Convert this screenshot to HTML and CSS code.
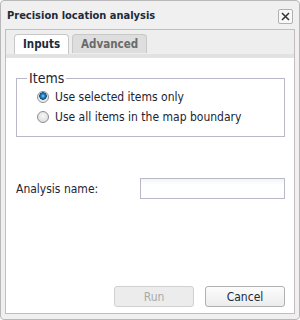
FILE: index.html
```html
<!DOCTYPE html>
<html lang="en">
	<head>
		<title>Precision location analysis</title>
		<link rel="stylesheet" href="styles.css">
	</head>
	<body>
		<div class="dialog">
			<div class="titlebar">
				<span class="title">Precision location analysis</span>
				<button class="close" title="Close">
					<svg width="9" height="9" viewBox="0 0 9 9"><path d="M1 1 L8 8 M8 1 L1 8" stroke="#333" stroke-width="1.5"/></svg>
				</button>
			</div>
			<div class="panel">
				<div class="tabs">
					<div class="tab active">Inputs</div>
					<div class="tab">Advanced</div>
				</div>
				<div class="body">
					<fieldset class="items">
						<legend>Items</legend>
						<label class="radio"><input type="radio" name="items" checked> Use selected items only</label>
						<label class="radio"><input type="radio" name="items"> Use all items in the map boundary</label>
					</fieldset>
					<div class="name-row">
						<label for="analysisName">Analysis name:</label>
						<input type="text" id="analysisName">
					</div>
					<div class="buttons">
						<button class="btn" disabled>Run</button>
						<button class="btn">Cancel</button>
					</div>
				</div>
			</div>
		</div>
	</body>
</html>
```
FILE: styles.css
```css
html, body {
	margin: 0;
	padding: 0;
}

body {
	font-family: "DejaVu Sans", sans-serif;
	font-stretch: condensed;
	font-size: 12px;
	color: #1e2432;
	background: #fff;
}

.dialog {
	width: 300px;
	height: 320px;
	box-sizing: border-box;
	background: #f0f0f0;
	border: 1px solid #b8b8b8;
	border-radius: 4px;
	padding: 0 4px 5px 4px;
	display: flex;
	flex-direction: column;
}

.titlebar {
	height: 28px;
	display: flex;
	align-items: center;
	justify-content: space-between;
	padding: 0 2px 0 2px;
}

.title {
	font-size: 11px;
	font-weight: bold;
	color: #1c2a3a;
}

.close {
	width: 15px;
	height: 15px;
	margin-top: 3px;
	padding: 0;
	border: 1px solid #b0b0b0;
	border-radius: 2px;
	background: #f8f8f8;
	display: flex;
	align-items: center;
	justify-content: center;
}

.panel {
	flex: 1;
	border: 1px solid #c4bcc0;
	background: #fff;
	display: flex;
	flex-direction: column;
}

.tabs {
	background: #eeeeee;
	padding: 4px 8px 0 8px;
	display: flex;
	gap: 3px;
	border-bottom: 4px solid #e2e2e2;
}

.tab {
	height: 18px;
	line-height: 19px;
	padding: 0 8px;
	border: 1px solid #c8c8c8;
	border-bottom: none;
	border-radius: 4px 4px 0 0;
	background: #dedede;
	color: #6a6a6a;
	font-size: 11.5px;
	font-weight: bold;
}

.tab.active {
	background: #fff;
	color: #1c2a3a;
	height: 19px;
}

.body {
	flex: 1;
	display: flex;
	flex-direction: column;
	padding: 12px 9px 6px 10px;
}

.items {
	margin: 0;
	padding: 3px 0 11px 20px;
	border: 1px solid #b8b8c8;
	display: flex;
	flex-direction: column;
	gap: 4px;
}

.items legend {
	font-size: 14px;
	padding: 0 2px;
	margin-left: -10px;
}

.radio {
	display: flex;
	align-items: center;
	height: 16px;
}

.radio input {
	appearance: none;
	margin: 0 6px 0 0;
	width: 12px;
	height: 12px;
	border: 1px solid #8e8e8e;
	border-radius: 50%;
	background: radial-gradient(circle at 50% 40%, #f6f6f6, #d6d6d6);
	box-shadow: 0 0 0 1px #fff;
}

.radio input:checked {
	background: radial-gradient(circle at 50% 40%, #7fd0ff 0, #1a7ec0 2px, #0f4f80 3.5px, #e4e4e4 4px, #f4f4f4 6px);
}

.name-row {
	display: flex;
	align-items: center;
	justify-content: space-between;
	margin-top: 41px;
}

.name-row input {
	width: 145px;
	height: 21px;
	box-sizing: border-box;
	border: 1px solid #b8b8c8;
	background: linear-gradient(#f2f4f4, #fff 6px);
}

.buttons {
	margin-top: auto;
	display: flex;
	justify-content: flex-end;
	gap: 11px;
}

.btn {
	width: 80px;
	height: 21px;
	font-family: inherit;
	font-stretch: condensed;
	font-size: 12px;
	color: #1c2a3a;
	border: 1px solid #b0b0b0;
	border-radius: 3px;
	background: linear-gradient(#fcfcfc, #ececec);
}

.btn:disabled {
	color: #aaa;
	border-color: #d0d0d0;
	background: #ececec;
}
```
